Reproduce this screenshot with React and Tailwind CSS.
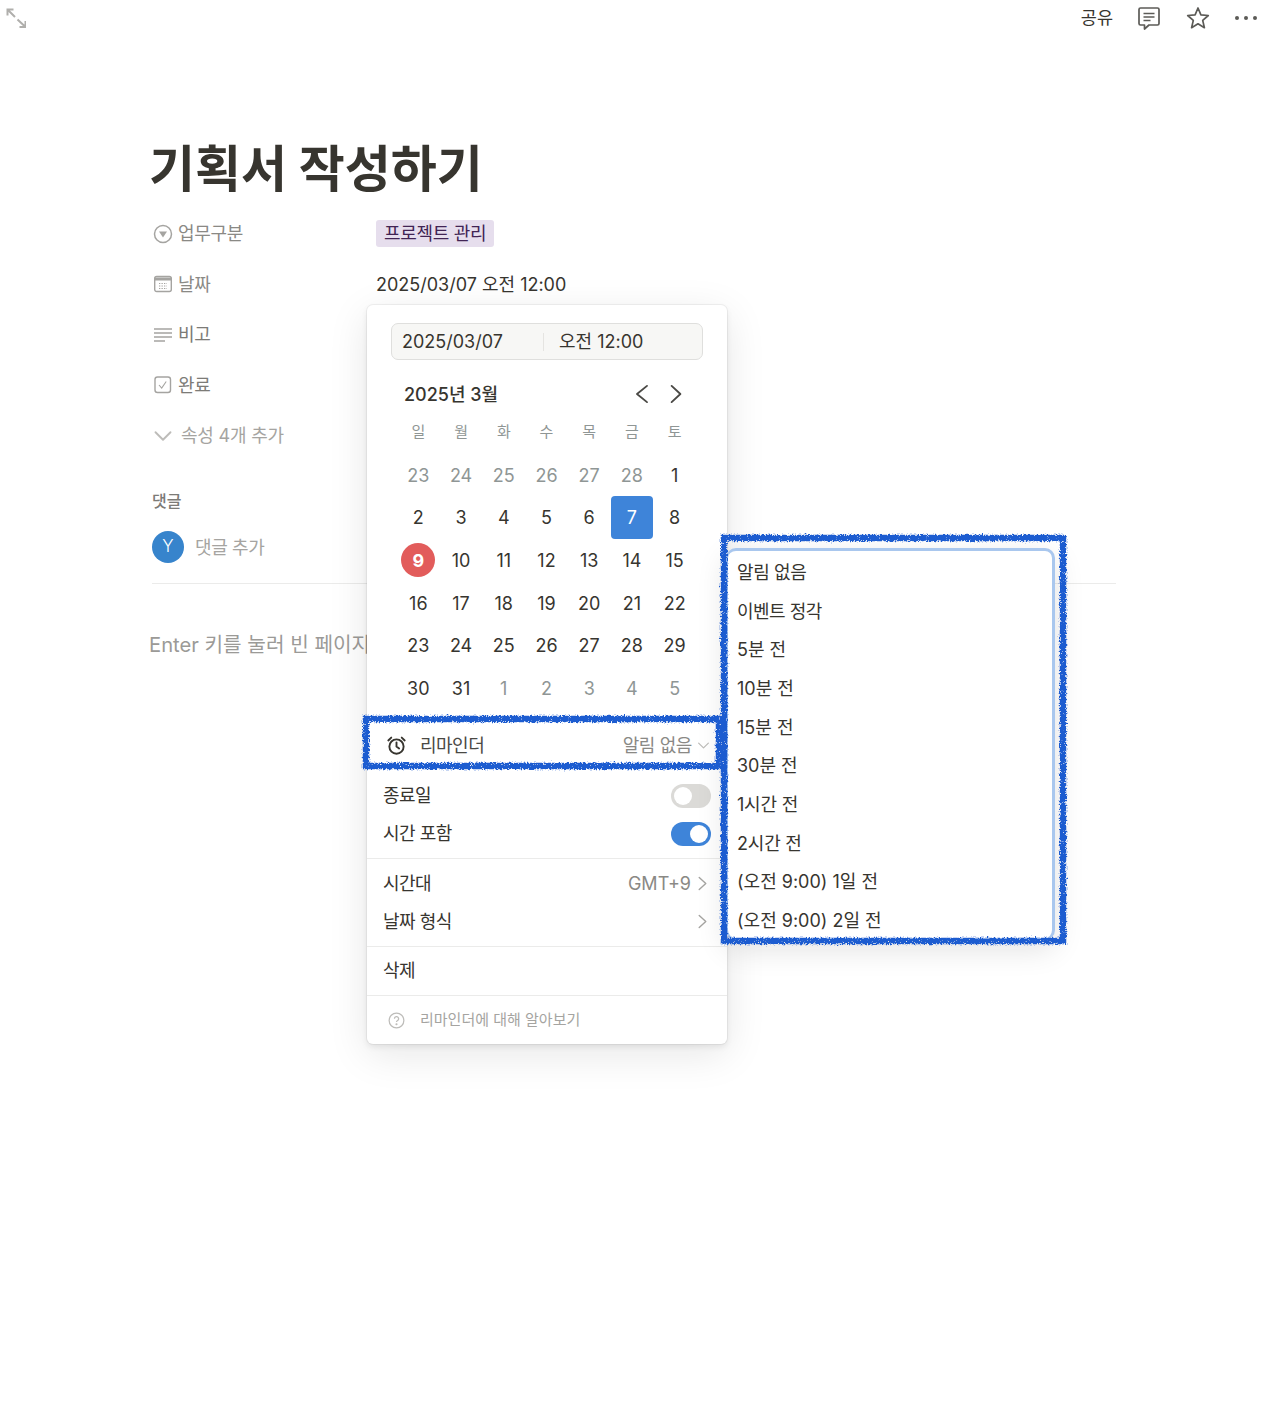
import React from "react";

const FONT = "font-['Inter','Noto_Sans_CJK_KR',sans-serif]";

const Chevron = ({ dir = "down", className = "" }) => {
  const d = { down: "M2 5l6 6 6-6", left: "M12 1.500L4 8l8 6.500", right: "M4.500 1.500L11.500 8l-7 6.500" }[dir];
  return (
    <svg viewBox="0 0 16 16" fill="none" stroke="currentColor" strokeWidth="1.5" strokeLinecap="round" strokeLinejoin="round" className={className}>
      <path d={d} />
    </svg>
  );
};

const PropRow = ({ icon, label, children, labelClass = "text-[#8a8985]" }) => (
  <div className="flex items-center h-[50.5px]">
    <div className="flex items-center w-[226px] pl-[3px]">
      <span className="w-[20px] h-[20px] flex items-center justify-center shrink-0">{icon}</span>
      <span className={`ml-[5px] text-[18px] tracking-[-0.3px] ${labelClass}`}>{label}</span>
    </div>
    {children}
  </div>
);

const weekdays = ["일", "월", "화", "수", "목", "금", "토"];
const days = [
  [23, 1], [24, 1], [25, 1], [26, 1], [27, 1], [28, 1], [1, 0],
  [2, 0], [3, 0], [4, 0], [5, 0], [6, 0], [7, 0], [8, 0],
  [9, 0], [10, 0], [11, 0], [12, 0], [13, 0], [14, 0], [15, 0],
  [16, 0], [17, 0], [18, 0], [19, 0], [20, 0], [21, 0], [22, 0],
  [23, 0], [24, 0], [25, 0], [26, 0], [27, 0], [28, 0], [29, 0],
  [30, 0], [31, 0], [1, 1], [2, 1], [3, 1], [4, 1], [5, 1],
];
const reminders = [
  ["알림 없음", "tracking-[-0.4px]"],
  ["이벤트 정각", "tracking-[-0.5px]"],
  ["5분 전", ""],
  ["10분 전", ""],
  ["15분 전", ""],
  ["30분 전", ""],
  ["1시간 전", "tracking-[-0.2px]"],
  ["2시간 전", "tracking-[-0.2px]"],
  ["(오전 9:00) 1일 전", ""],
  ["(오전 9:00) 2일 전", ""],
];

const Day = ({ n, muted, index }) => {
  if (index === 12)
    return <div className="h-[42.6px] flex items-center justify-center"><span className="w-[42px] h-[43px] rounded-[4px] bg-[#3e84d9] text-white flex items-center justify-center">7</span></div>;
  if (index === 14)
    return <div className="h-[42.6px] flex items-center justify-center"><span className="w-[34px] h-[34px] rounded-full bg-[#e25c5b] text-white font-bold flex items-center justify-center">9</span></div>;
  return <div className={`h-[42.6px] flex items-center justify-center ${muted ? "text-[#8f9695]" : "text-[#37352f]"}`}>{n}</div>;
};

const Toggle = ({ on }) => (
  <span className={`w-[40px] h-[24px] rounded-full flex items-center px-[3px] ${on ? "bg-[#3e84d9] justify-end" : "bg-[#dbdad7] justify-start"}`}>
    <span className="w-[18px] h-[18px] rounded-full bg-white" />
  </span>
);

const Scribble = () => (
  <svg className="absolute inset-0 w-full h-full overflow-visible pointer-events-none">
    <g filter="url(#rough)">
      <rect x="0" y="0" width="100%" height="100%" fill="none" stroke="#1f5bd0" strokeWidth="6.500" />
    </g>
  </svg>
);

export default function App() {
  return (
    <div className={`relative w-[1276px] h-[1410px] bg-white overflow-hidden text-[#37352f] ${FONT}`}>
      <svg width="0" height="0" className="absolute">
        <filter id="rough" filterUnits="userSpaceOnUse" x="-30" y="-30" width="460" height="480">
          <feTurbulence type="fractalNoise" baseFrequency="0.6" numOctaves="2" seed="4" result="warp" />
          <feDisplacementMap in="SourceGraphic" in2="warp" scale="5" result="line" />
          <feTurbulence type="fractalNoise" baseFrequency="0.9" numOctaves="1" seed="11" />
          <feColorMatrix type="matrix" values="0 0 0 0 0  0 0 0 0 0  0 0 0 0 0  9 0 0 0 -2.100" result="grain" />
          <feComposite in="line" in2="grain" operator="in" />
        </filter>
      </svg>

      {/* Top bar */}
      <div className="flex items-center justify-between h-[36px] pl-[6px] pr-[19px]">
        <svg viewBox="0 0 20 20" className="w-[20px] h-[20px] text-[#b0afac]" fill="none" stroke="currentColor" strokeWidth="2">
          <path d="M1.500 7.500V1.500h6M1.500 1.500L9 9M19.500 13V19h-6M19.500 19L11.500 11.500" />
        </svg>
        <div className="flex items-center">
          <span className="text-[17.5px] mr-[24px]">공유</span>
          <svg viewBox="0 0 24 24" className="w-[24px] h-[24px] mr-[25px] text-[#5c5b57]" fill="none" stroke="currentColor" strokeWidth="1.7" strokeLinejoin="round">
            <path d="M2 3.500A1.500 1.500 0 0 1 3.500 2h17A1.500 1.500 0 0 1 22 3.500v14a1.500 1.500 0 0 1-1.500 1.500H12l-4.500 4v-4h-4A1.500 1.500 0 0 1 2 17.500z" />
            <path d="M6.500 7.500h11M6.500 11h11M6.500 14.500h7" />
          </svg>
          <svg viewBox="0 0 24 24" className="w-[24px] h-[24px] mr-[25px] text-[#5c5b57]" fill="none" stroke="currentColor" strokeWidth="1.7" strokeLinejoin="round">
            <path d="M12 2l2.900 6.800 7.400.7-5.600 4.900 1.700 7.300-6.400-3.900-6.400 3.900 1.700-7.300L1.700 9.500l7.400-.7z" />
          </svg>
          <span className="flex gap-[5px]">
            <span className="w-[4px] h-[4px] rounded-full bg-[#5c5b57]" />
            <span className="w-[4px] h-[4px] rounded-full bg-[#5c5b57]" />
            <span className="w-[4px] h-[4px] rounded-full bg-[#5c5b57]" />
          </span>
        </div>
      </div>

      {/* Page */}
      <div className="pl-[150px] pr-[160px]">
        <h1 className="mt-[102px] -ml-[1px] h-[62px] text-[50px] leading-[62px] font-bold text-[#37352f]">기획서 작성하기</h1>
        <div className="mt-[8.5px]">
          <PropRow icon={
            <svg viewBox="0 0 20 20" className="w-[20px] h-[20px]" fill="none"><circle cx="10" cy="10" r="8.500" stroke="#a5a4a1" strokeWidth="1.500" /><path d="M6 7.500h8L10 13.500z" fill="#a5a4a1" /></svg>
          } label="업무구분">
            <span className="h-[27px] px-[8px] rounded-[3px] bg-[#e6deed] text-[#412454] text-[18px] tracking-[-0.3px] flex items-center">프로젝트 관리</span>
          </PropRow>
          <PropRow icon={
            <svg viewBox="0 0 20 20" className="w-[20px] h-[20px]" fill="none"><rect x="1.700" y="2.500" width="16.600" height="15" rx="2" stroke="#a5a4a1" strokeWidth="1.400" /><path d="M1.700 3.500h16.600v3H1.700z" fill="#a5a4a1" /><path d="M6 9.500h8M6 12h8M6 14.500h8" stroke="#a5a4a1" strokeWidth="1.200" strokeDasharray="1.300 1.200" /></svg>
          } label="날짜">
            <span className="text-[18px] text-[#37352f]">2025/03/07 오전 12:00</span>
          </PropRow>
          <PropRow labelClass="text-[#7c7b77]" icon={
            <svg viewBox="0 0 20 20" className="w-[20px] h-[20px]" fill="none" stroke="#a5a4a1" strokeWidth="1.300"><path d="M1 4h18M1 8h18M1 12h18M1 16h11" /></svg>
          } label="비고" />
          <PropRow labelClass="text-[#7c7b77]" icon={
            <svg viewBox="0 0 20 20" className="w-[20px] h-[20px]" fill="none" stroke="#a5a4a1"><rect x="2" y="2" width="15.500" height="15.500" rx="2.500" strokeWidth="1.400" /><path d="M6 10l2.700 3 4.500-6.500" strokeWidth="1.100" /></svg>
          } label="완료" />
          <div className="flex items-center h-[50.5px] pl-[3px] text-[#a5a4a1]">
            <span className="w-[20px] flex justify-center"><Chevron className="w-[20px] h-[20px] text-[#bdbcb9]" /></span>
            <span className="ml-[8px] text-[18px] tracking-[-0.2px]">속성 4개 추가</span>
          </div>
        </div>

        <div className="mt-[28px] ml-[2px] text-[16px] leading-[24px] font-medium text-[#7c7b77]">댓글</div>
        <div className="mt-[18px] ml-[2px] flex items-center h-[32px]">
          <span className="w-[32px] h-[32px] rounded-full bg-[#3784cc] text-white text-[17px] font-light flex items-center justify-center">Y</span>
          <span className="ml-[11px] text-[18px] tracking-[-0.4px] text-[#a5a4a1]">댓글 추가</span>
        </div>
        <div className="mt-[20px] ml-[2px] h-px bg-[#ebebea]" />
        <div className="mt-[47px] -ml-[1px] whitespace-nowrap text-[20.2px] leading-[28px] text-[#9b9a97]">Enter 키를 눌러 빈 페이지</div>
      </div>

      {/* Date popover */}
      <div className="absolute left-[367px] top-[305px] w-[360px] h-[739px] bg-white rounded-[6px] shadow-[0_0_0_1px_rgba(15,15,15,0.05),0_3px_6px_rgba(15,15,15,0.08),0_10px_40px_rgba(15,15,15,0.1)] text-[18px]">
        <div className="px-[24px] pt-[18px]">
          <div className="h-[37px] rounded-[7px] bg-[#f7f7f5] border border-[#dfdfdd] flex items-center text-[#37352f]">
            <span className="w-[151px] pl-[10px]">2025/03/07</span>
            <span className="w-px h-[18px] bg-[#e5e4e1]" />
            <span className="ml-[15px]">오전 12:00</span>
          </div>
          <div className="mt-[19px] h-[30px] flex items-center justify-between pl-[13px] pr-[17px]">
            <span className="font-medium">2025년 3월</span>
            <span className="flex gap-[14px] text-[#4a4945]">
              <Chevron dir="left" className="w-[20px] h-[20px]" />
              <Chevron dir="right" className="w-[20px] h-[20px]" />
            </span>
          </div>
        </div>
        <div className="pl-[30px] pr-[31px] mt-[8px]">
          <div className="grid grid-cols-7 h-[37px] pt-[4px] text-[15px] text-[#8f9695] text-center">
            {weekdays.map((w) => <span key={w}>{w}</span>)}
          </div>
          <div className="grid grid-cols-7">
            {days.map(([n, m], i) => <Day key={i} n={n} muted={!!m} index={i} />)}
          </div>
        </div>

        <div className="mt-[12px] h-[48px] flex items-center pl-[19px] pr-[17px]">
          <svg viewBox="0 0 20 20" className="w-[21px] h-[21px]" fill="none" stroke="#37352f" strokeWidth="1.800" strokeLinecap="round">
            <circle cx="10" cy="11" r="6.800" /><path d="M10 7v4l2.500 1.800M2.200 5.200L5 2.500M17.800 5.200L15 2.500" />
          </svg>
          <span className="ml-[13px] text-[#4a4945] tracking-[-0.5px]">리마인더</span>
          <span className="ml-auto text-[#8a8985] tracking-[-0.4px]">알림 없음</span>
          <Chevron className="ml-[5px] w-[13px] h-[13px] text-[#bdbcb9]" />
        </div>

        <div className="mt-[7px] tracking-[-0.5px]">
          <div className="h-[38px] flex items-center justify-between px-[16px]"><span>종료일</span><Toggle /></div>
          <div className="h-[38px] flex items-center justify-between px-[16px]"><span>시간 포함</span><Toggle on /></div>
        </div>
        <div className="mt-[5px] h-px bg-[#ebebea]" />
        <div className="pt-[6px]">
          <div className="h-[38px] flex items-center pl-[16px] pr-[17px]"><span className="tracking-[-0.5px]">시간대</span><span className="ml-auto text-[#8a8985]">GMT+9</span><Chevron dir="right" className="ml-[4px] w-[15px] h-[15px] text-[#a5a4a1]" /></div>
          <div className="h-[38px] flex items-center pl-[16px] pr-[17px]"><span className="tracking-[-0.5px]">날짜 형식</span><Chevron dir="right" className="ml-auto w-[15px] h-[15px] text-[#a5a4a1]" /></div>
        </div>
        <div className="mt-[5px] h-px bg-[#ebebea]" />
        <div className="h-[48px] flex items-center pl-[16px] tracking-[-0.5px]">삭제</div>
        <div className="h-px bg-[#ebebea]" />
        <div className="h-[49px] flex items-center pl-[21px] text-[15px] text-[#a5a4a1]">
          <svg viewBox="0 0 18 18" className="w-[17px] h-[17px]" fill="none" stroke="#bdbcb9" strokeWidth="1.300"><circle cx="9" cy="9" r="7.800" /><path d="M6.800 7.100a2.200 2.200 0 1 1 3.300 1.900c-.7.400-1.100.8-1.100 1.700" /><circle cx="9" cy="13" r=".5" fill="#bdbcb9" /></svg>
          <span className="ml-[15px]">리마인더에 대해 알아보기</span>
        </div>
      </div>

      {/* Reminder menu */}
      <div className="absolute left-[726px] top-[548px] w-[329px] h-[392px] bg-white rounded-[10px] border-l-[2px] border-t-[3px] border-r-[3px] border-b-[2px] border-[#a9c7ee] shadow-[0_9px_30px_rgba(15,15,15,0.12)] pl-[9px] pt-[2px] text-[18px] text-[#37352f]">
        {reminders.map(([r, t]) => <div key={r} className={`h-[38.700px] flex items-center ${t}`}>{r}</div>)}
      </div>

      {/* Hand-drawn annotations */}
      <div className="absolute left-[366px] top-[719px] w-[353px] h-[47px]"><Scribble /></div>
      <div className="absolute left-[724px] top-[538px] w-[339px] h-[403px]"><Scribble /></div>
    </div>
  );
}
